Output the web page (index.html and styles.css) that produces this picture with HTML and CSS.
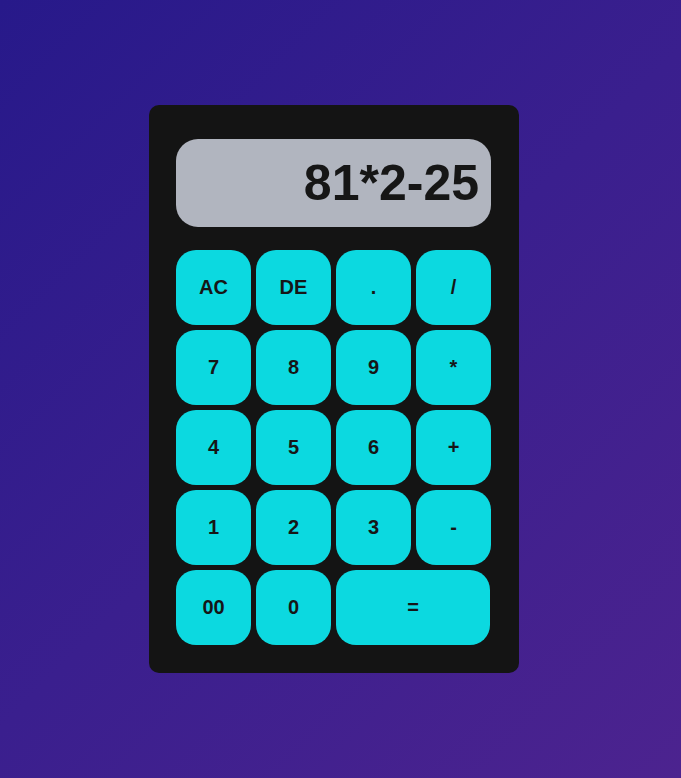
FILE: index.html
```html
<!DOCTYPE html>
<html>
<head>
<meta charset="utf-8">
<link rel="stylesheet" href="styles.css">
</head>
<body>
<div class="calc">
  <div class="display">81*2-25</div>
  <div class="keys">
    <button class="key">AC</button>
    <button class="key">DE</button>
    <button class="key">.</button>
    <button class="key">/</button>
    <button class="key">7</button>
    <button class="key">8</button>
    <button class="key">9</button>
    <button class="key">*</button>
    <button class="key">4</button>
    <button class="key">5</button>
    <button class="key">6</button>
    <button class="key">+</button>
    <button class="key">1</button>
    <button class="key">2</button>
    <button class="key">3</button>
    <button class="key">-</button>
    <button class="key">00</button>
    <button class="key">0</button>
    <button class="key wide">=</button>
  </div>
</div>
</body>
</html>
```
FILE: styles.css
```css
html, body {
  margin: 0;
  height: 100%;
}
body {
  display: flex;
  align-items: center;
  justify-content: center;
  padding-right: 13px;
  box-sizing: border-box;
  background: linear-gradient(135deg, #27198a 0%, #3a1f8e 50%, #4c238f 100%);
  font-family: "Liberation Sans", Arial, sans-serif;
}
.calc {
  width: 370px;
  height: 568px;
  box-sizing: border-box;
  padding: 34px 28px 28px 27px;
  background: #141414;
  border-radius: 10px;
  display: flex;
  flex-direction: column;
  gap: 23px;
}
.display {
  height: 88px;
  background: #b1b5bf;
  border-radius: 22px;
  display: flex;
  align-items: center;
  justify-content: flex-end;
  padding-right: 12px;
  font-size: 50px;
  font-weight: bold;
  color: #161616;
}
.keys {
  display: grid;
  grid-template-columns: repeat(4, 75px);
  grid-auto-rows: 75px;
  gap: 5px;
}
.key {
  border: none;
  border-radius: 20px;
  background: #0cd9e0;
  color: #161616;
  font-family: "Liberation Sans", Arial, sans-serif;
  font-size: 20px;
  font-weight: bold;
  padding: 0;
}
.wide {
  grid-column: span 2;
  width: 154px;
}
```
